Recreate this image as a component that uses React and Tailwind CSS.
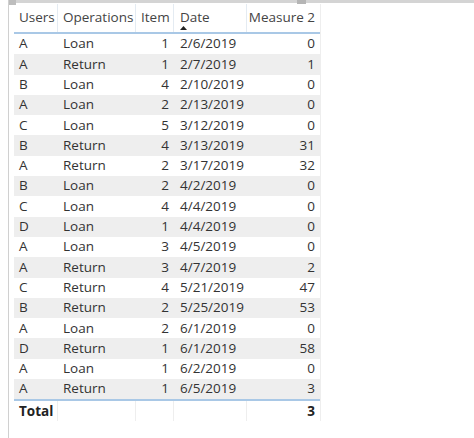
const rows = [
  ["A", "Loan", 1, "2/6/2019", 0],
  ["A", "Return", 1, "2/7/2019", 1],
  ["B", "Loan", 4, "2/10/2019", 0],
  ["A", "Loan", 2, "2/13/2019", 0],
  ["C", "Loan", 5, "3/12/2019", 0],
  ["B", "Return", 4, "3/13/2019", 31],
  ["A", "Return", 2, "3/17/2019", 32],
  ["B", "Loan", 2, "4/2/2019", 0],
  ["C", "Loan", 4, "4/4/2019", 0],
  ["D", "Loan", 1, "4/4/2019", 0],
  ["A", "Loan", 3, "4/5/2019", 0],
  ["A", "Return", 3, "4/7/2019", 2],
  ["C", "Return", 4, "5/21/2019", 47],
  ["B", "Return", 2, "5/25/2019", 53],
  ["A", "Loan", 2, "6/1/2019", 0],
  ["D", "Return", 1, "6/1/2019", 58],
  ["A", "Loan", 1, "6/2/2019", 0],
  ["A", "Return", 1, "6/5/2019", 3],
];

const App = () => {
  return (
    <div
      className="relative w-[474px] h-[438px] bg-white overflow-hidden text-[13.5px] text-[#333]"
      style={{ fontFamily: '"Open Sans", "Noto Sans", sans-serif' }}
    >
      {/* top bar + visual frame */}
      <div className="absolute left-[8px] top-0 right-0 h-[3px] bg-[#d4d4d4]" />
      <div className="absolute left-[8px] top-0 w-[8px] h-[5px] bg-[#bdbdbd]" />
      <div className="absolute left-[297px] top-0 w-[9px] h-[4px] bg-[#b5b5b5]" />
      <div className="absolute left-[8px] top-0 bottom-0 w-px bg-[#d0d0d0]" />

      <div className="pl-[14px] pt-[4px]">
        <div className="w-[307px] border-r border-[#eeeeee]">
          {/* header */}
          <div className="flex h-[30px] border-b-2 border-[#a9c8e6] text-[#444]">
            <div className="w-[44px] pl-[5px] pt-[3px] border-r border-[#e4ebf2]">Users</div>
            <div className="w-[78px] pl-[5px] pt-[3px] border-r border-[#e4ebf2]">Operations</div>
            <div className="w-[38px] pl-[5px] pt-[3px] border-r border-[#e4ebf2]">Item</div>
            <div className="relative w-[73px] pl-[6px] pt-[3px] border-r border-[#e4ebf2]">
              Date
              <svg className="absolute left-[6px] top-[22px]" width="7" height="4" viewBox="0 0 7 4">
                <polygon points="3.5,0 7,4 0,4" fill="#222" />
              </svg>
            </div>
            <div className="flex-1 pr-[5px] pt-[3px] text-right">Measure 2</div>
          </div>

          {/* body */}
          {rows.map((r, i) => (
            <div
              key={i}
              className={`flex h-[20.3px] items-center leading-none ${i % 2 === 1 ? "bg-[#eeeeee]" : "bg-white"}`}
            >
              <div className="w-[44px] pl-[5px]">{r[0]}</div>
              <div className="w-[78px] pl-[5px]">{r[1]}</div>
              <div className="w-[38px] pr-[5px] text-right">{r[2]}</div>
              <div className="w-[73px] pl-[6px]">{r[3]}</div>
              <div className="flex-1 pr-[5px] text-right">{r[4]}</div>
            </div>
          ))}

          {/* total */}
          <div className="flex h-[22px] items-center border-t-2 border-[#a9c8e6] font-bold text-[#222]">
            <div className="w-[44px] h-full flex items-center pl-[5px] border-r border-[#eeeeee]">Total</div>
            <div className="w-[78px] h-full border-r border-[#eeeeee]" />
            <div className="w-[38px] h-full border-r border-[#eeeeee]" />
            <div className="w-[73px] h-full border-r border-[#eeeeee]" />
            <div className="flex-1 pr-[5px] text-right">3</div>
          </div>
        </div>
      </div>
    </div>
  );
};

export default App;
